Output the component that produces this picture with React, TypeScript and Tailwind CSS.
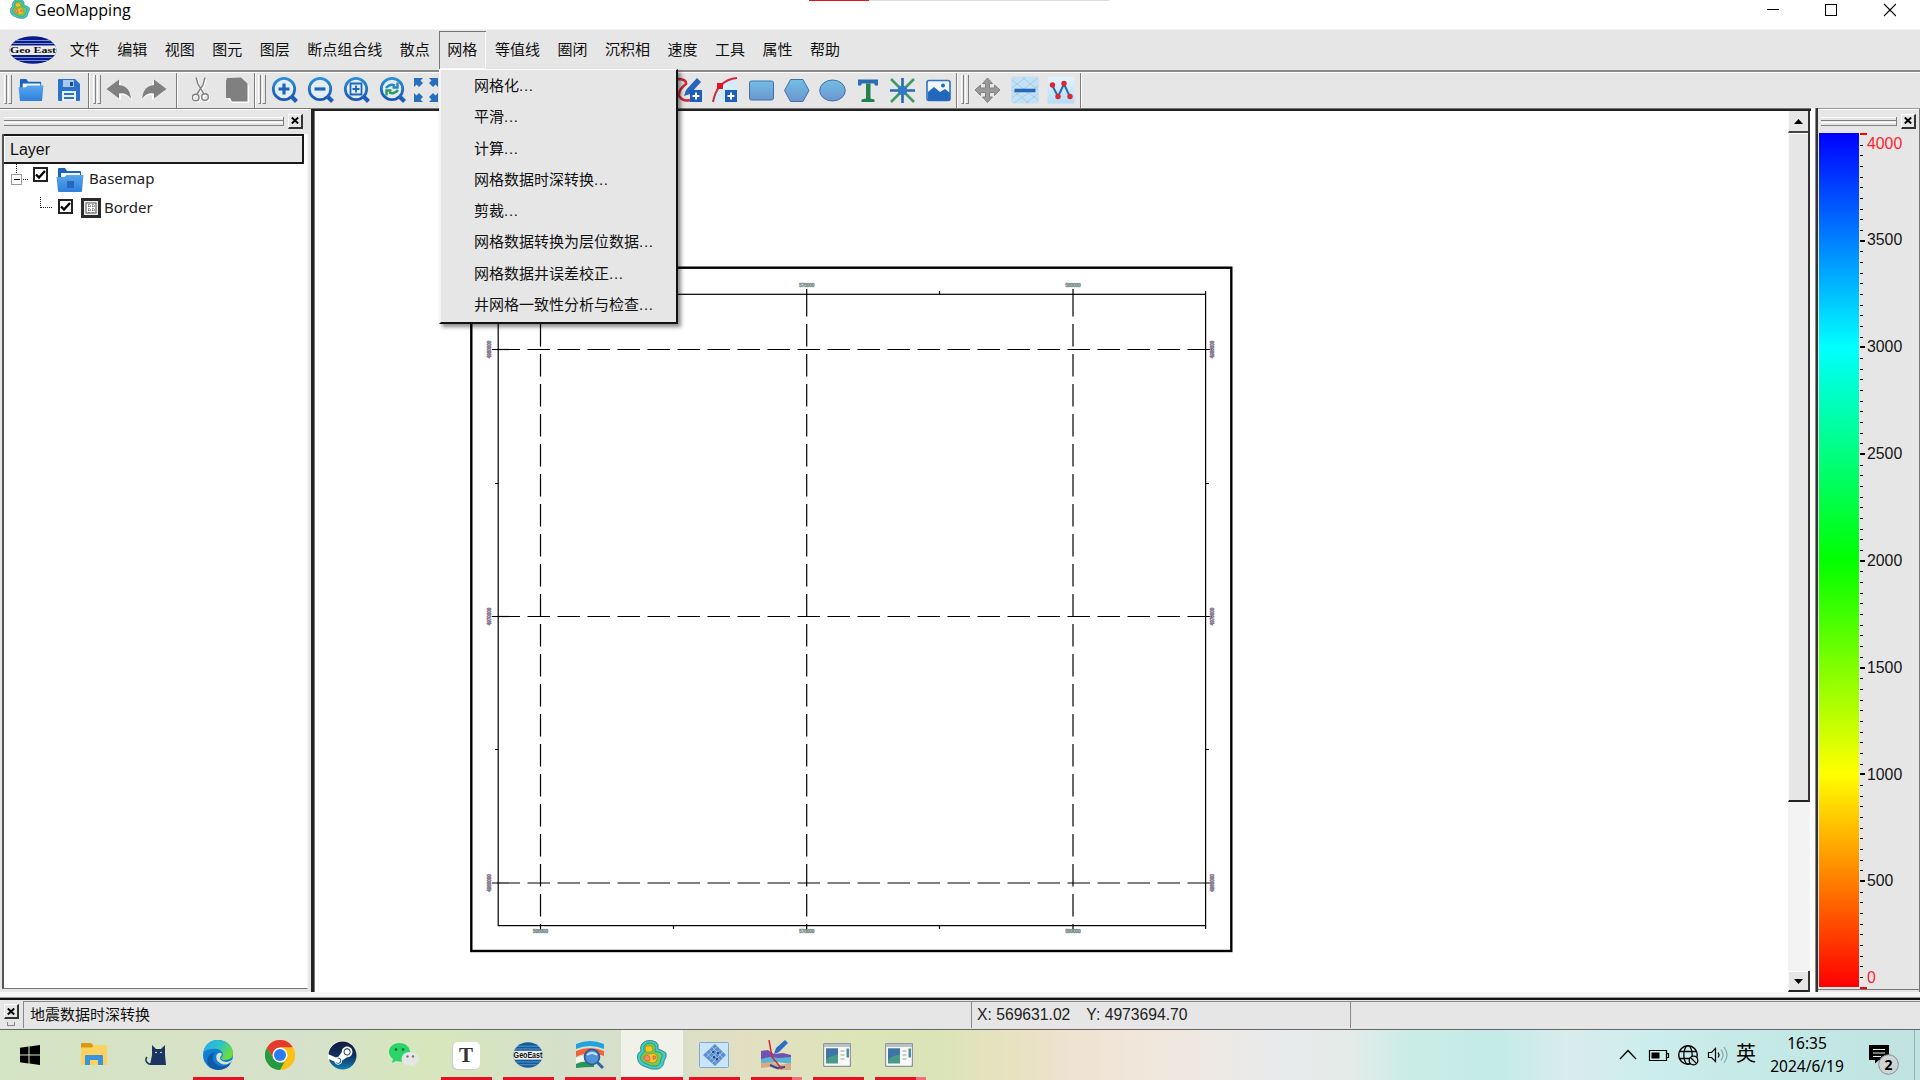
import React from "react";
import { FaSteam } from "react-icons/fa";

const menus = ["文件", "编辑", "视图", "图元", "图层", "断点组合线", "散点", "网格", "等值线", "圈闭", "沉积相", "速度", "工具", "属性", "帮助"];
const gridMenu = [
  "网格化",
  "平滑",
  "计算",
  "网格数据时深转换",
  "剪裁",
  "网格数据转换为层位数据",
  "网格数据井误差校正",
  "井网格一致性分析与检查",
];

const Defs = () => (
  <svg className="absolute h-0 w-0">
    <defs>
      <linearGradient id="blue" x1="0" y1="0" x2="0" y2="1">
        <stop offset="0" stopColor="#2b8fd6" />
        <stop offset="1" stopColor="#1d57b5" />
      </linearGradient>
      <linearGradient id="folder" x1="0" y1="0" x2="0" y2="1">
        <stop offset="0" stopColor="#5aa6ec" />
        <stop offset="1" stopColor="#2f7fdc" />
      </linearGradient>
      <linearGradient id="shape" x1="0" y1="0" x2="0" y2="1">
        <stop offset="0" stopColor="#72bfe4" />
        <stop offset="1" stopColor="#6c95cf" />
      </linearGradient>
      <linearGradient id="pale" x1="0" y1="0" x2="0" y2="1">
        <stop offset="0" stopColor="#e4f3fd" />
        <stop offset="1" stopColor="#b5dcf7" />
      </linearGradient>
      <linearGradient id="edgeTop" x1="0" y1="0" x2="1" y2="0.5">
        <stop offset="0" stopColor="#2aa9e8" />
        <stop offset="0.55" stopColor="#2cc3c8" />
        <stop offset="1" stopColor="#6fdc3c" />
      </linearGradient>
      <linearGradient id="steam" x1="0" y1="0" x2="0" y2="1">
        <stop offset="0" stopColor="#141a3c" />
        <stop offset="0.5" stopColor="#10305c" />
        <stop offset="1" stopColor="#1180b8" />
      </linearGradient>
    </defs>
  </svg>
);

const GeoBlob = ({ s }: { s: number }) => (
  <svg width={s} height={s} viewBox="0 0 30 30">
    <path d="M9 1 Q14 -1 19 2 Q22 4 21 9 Q25 10 29 13 Q30 17 27 21 Q27 27 21 29 Q14 30 9 27 Q1 25 0.5 18 Q0 13 4 11 Q2 4 9 1Z" fill="#35cfd6" stroke="#4a6b60" strokeWidth="0.8" />
    <path d="M10 3.5 Q14 2 17.5 4.5 Q19 7 18 11.5 Q24 12 25.5 15 Q25 18 23.5 20 Q24 25 19 26 Q13 26.500 9.500 24 Q4 22 3.500 17.500 Q4 14 7.500 12 Q5 6 10 3.500Z" fill="#6fcb5c" stroke="#3f7f4c" strokeWidth="0.7" />
    <path d="M9 6h6l1 4-2 2H9L8 8Z M6 17q3-4 7-3 4-2 7 1 1 4-1 7-4 2-7-0-5 0-6-5Z" fill="#fcc31e" stroke="#8d8d2a" strokeWidth="0.7" />
    <path d="M7 17q3-3 5-1 2 3 0 5-4 1-5-4ZM16 16q3-1 3 2-1 2-3 1Z" fill="#f58672" stroke="#a06a3c" strokeWidth="0.6" />
  </svg>
);

const GeoEast = ({ w, h, task }: { w: number; h: number; task?: boolean }) => (
  <svg width={w} height={h} viewBox="0 0 48 28" preserveAspectRatio="none">
    <defs>
      <clipPath id={task ? "geTask" : "geMenu"}>
        <ellipse cx="24" cy="14" rx="23.500" ry="13.700" />
      </clipPath>
    </defs>
    <g clipPath={task ? "url(#geTask)" : "url(#geMenu)"}>
      <rect width="48" height="28" fill={task ? "#125c9e" : "#0a1a8c"} />
      <path d="M0 4.500h48M0 7.500h48M0 21.500h48M0 24.500h48" stroke="#8fb0da" strokeWidth="0.8" />
      <rect y="9.500" width="48" height="9.500" fill="#ececec" />
    </g>
    <text x="24" y="17" textAnchor="middle" textLength="46" lengthAdjust="spacingAndGlyphs" fontSize={task ? 9 : 8} fontWeight="700" className={task ? "font-['Liberation_Sans']" : "font-['Liberation_Serif']"} fill="#111">
      {task ? "GeoEast" : "Geo East"}
    </text>
  </svg>
);

const FolderIcon = ({ tree }: { tree?: boolean }) => (
  <svg width={tree ? 28 : 26} height={tree ? 26 : 24} viewBox="0 0 28 26">
    <path d="M2 2q0-1 1-1h6l2 3h13q1 0 1 1v7H2Z" fill="#1d63bd" />
    <rect x="5" y="6" width="19" height="7" fill="#f4f8fc" />
    <path d="M0.500 10h8l2-2h17l-1.500 16q0 1-1 1H3q-1 0-1-1Z" fill="url(#folder)" />
    {tree && <rect x="11" y="14" width="7" height="7" fill="#2668bd" />}
  </svg>
);

const SaveIcon = () => (
  <svg width="24" height="24" viewBox="0 0 24 24">
    <path d="M1 2q0-1 1-1h16l5 5v16q0 1-1 1H2q-1 0-1-1Z" fill="#2a72cc" />
    <rect x="6" y="2" width="11" height="7" fill="#a9c8ee" />
    <rect x="13" y="4" width="3" height="4" fill="#1c4a90" />
    <rect x="5" y="13" width="14" height="10" fill="#e8f0fa" />
    <path d="M7 16h10M7 20h10" stroke="#2a72cc" strokeWidth="1.800" />
  </svg>
);

const Arrow = ({ flip }: { flip?: boolean }) => (
  <svg width="26" height="22" viewBox="0 0 26 22" className={flip ? "-scale-x-100" : ""}>
    <path d="M1.500 11 14 2v5q10 1 11 14-4-7-11-6v5Z" fill="#fff" transform="translate(1 1)" />
    <path d="M0.500 10 13 0.500v5.500q11 1 12 14-4-6.500-12-5.500v5Z" fill="#808080" />
  </svg>
);

const Magnifier = ({ kind }: { kind: number }) => (
  <svg width="28" height="28" viewBox="0 0 28 28">
    <path d="M20 20l5.500 5.500" stroke="#1f5fb8" strokeWidth="4.200" />
    <circle cx="13" cy="13" r="10.700" fill="#e4eef6" stroke="url(#blue)" strokeWidth="2.800" />
    {kind === 0 && <path d="M7.500 13h11M13 7.500v11" stroke="#1f66ba" strokeWidth="3.200" />}
    {kind === 1 && <path d="M7.500 13h11" stroke="#1f66ba" strokeWidth="3.200" />}
    {kind === 2 && <path d="M7.500 7.500h11v11h-11ZM13 9.500v7M9.500 13h7" stroke="#1f66ba" strokeWidth="1.800" fill="none" />}
    {kind === 3 && (
      <g fill="none" strokeWidth="2.400">
        <path d="M7 12q4-5 9-2.500M18.500 6.500v5h-5" stroke="#2a86c4" />
        <path d="M19 14q-4 5-9 2.500M7.500 19.500v-5h5" stroke="#2f9a5c" />
      </g>
    )}
  </svg>
);

const Grip = () => (
  <div className="flex h-[29px] w-[8px] shrink-0 gap-[1px]">
    <div className="w-[3px] border-b border-l border-r border-b-[#808080] border-l-white border-r-[#808080]" />
    <div className="w-[4px] border-b border-l border-r border-b-[#808080] border-l-white border-r-[#808080]" />
  </div>
);

const Sep = () => <div className="-mb-[2px] h-[36px] w-[2px] shrink-0 border-l border-r border-l-[#7d7d7d] border-r-white" />;

const CloseBtn = () => (
  <div className="flex h-[15px] w-[15px] shrink-0 items-center justify-center border-b-2 border-l border-r-2 border-t border-b-[#333] border-l-white border-r-[#333] border-t-white bg-[#e6e6e6]">
    <svg width="8" height="7" viewBox="0 0 8 7">
      <path d="M0.800 0.500 7.200 6.500M7.200 0.500 0.800 6.500" stroke="#000" strokeWidth="1.900" />
    </svg>
  </div>
);

const DockGrip = () => (
  <div className="flex h-[9px] min-w-0 flex-1 flex-col justify-between border-r border-[#808080]">
    <div className="h-[4px] border-b border-t border-b-[#808080] border-t-white" />
    <div className="h-[4px] border-b border-t border-b-[#808080] border-t-white" />
  </div>
);

const Check = () => (
  <div className="flex h-[15px] w-[15px] shrink-0 items-center justify-center border-2 border-[#222] bg-white">
    <svg width="11" height="10" viewBox="0 0 11 10">
      <path d="M1 4.500 4 7.500 10 1" stroke="#000" strokeWidth="2.400" fill="none" />
    </svg>
  </div>
);

function TitleBar() {
  return (
    <div className="flex h-[29px] w-full shrink-0 bg-white">
      <div className="w-[10px]" />
      <div className="-mt-px h-[20px] w-[25px]">
        <GeoBlob s={20} />
      </div>
      <div className="w-[774px] font-['Open_Sans','Noto_Sans',sans-serif] text-[16px] leading-[20px] text-black">GeoMapping</div>
      <div className="h-px w-[60px] bg-[#e81123]" />
      <div className="h-px w-[240px] bg-[#ddd]" />
      <div className="flex flex-1 justify-end pr-[24px]">
        <svg width="130" height="20" viewBox="0 0 130 20" fill="none" stroke="#000" shapeRendering="crispEdges">
          <path d="M1 9.500h12M59.500 4.500h11v11h-11Z" />
          <path d="M118 4l12 12M130 4l-12 12" shapeRendering="auto" strokeWidth="1.100" />
        </svg>
      </div>
    </div>
  );
}

function MenuBar() {
  return (
    <div className="flex h-[43px] shrink-0 border-b-2 border-t border-b-[#8a8a8a] border-t-[#f4f4f4] bg-[#e6e6e6]">
      <div className="ml-[9px] mt-[6px] h-[28px] w-[52px]">
        <GeoEast w={48} h={28} />
      </div>
      {menus.map((m) => (
        <div
          key={m}
          className={
            "mt-px h-[38px] whitespace-nowrap px-[8.75px] text-[15px] leading-[37px] text-[#111] " +
            (m === "网格" ? "shadow-[inset_1px_1px_0_#777,inset_-1px_-1px_0_#fff]" : "")
          }
        >
          {m}
        </div>
      ))}
    </div>
  );
}

function ToolBar() {
  return (
    <div className="flex h-[36px] shrink-0 items-center border-t border-white bg-[#e6e6e6] pb-[2px]">
      <div className="flex h-full w-[88px] items-center pl-[4px]">
        <Grip />
        <div className="ml-[6px] w-[39px]"><FolderIcon /></div>
        <SaveIcon />
      </div>
      <Sep />
      <div className="flex h-full w-[86px] items-center pl-[3px]">
        <Grip />
        <div className="ml-[5px] flex gap-[9px]"><Arrow /><Arrow flip /></div>
      </div>
      <Sep />
      <div className="flex h-full w-[76px] items-center gap-[15px] pl-[14px]">
        <svg width="18" height="26" viewBox="0 0 18 26" fill="none" strokeWidth="1.400">
          <g stroke="#fff" transform="translate(1 1)">
            <path d="M4.500 1 6 7l6 10M13 1l-2 7-6 9" /><circle cx="4" cy="20.500" r="3.300" /><circle cx="13.500" cy="20" r="3.300" />
          </g>
          <g stroke="#808080">
            <path d="M4 0.500 6 7l6 10M13 0.500 11 8l-6 9" /><circle cx="3.700" cy="20.500" r="3.300" /><circle cx="13" cy="20" r="3.300" />
          </g>
        </svg>
        <svg width="24" height="26" viewBox="0 0 24 26">
          <path d="M2 2h15l6 6v17H7l-5-4Z" fill="#fff" transform="translate(1 1)" />
          <path d="M2 1 16 0.500l6.500 6V24.500H7L5 21H1V4Z" fill="#808080" />
        </svg>
      </div>
      <Sep />
      <div className="flex h-full w-[700px] items-center pl-[2px]">
        <Grip />
        <div className="ml-[5px] flex gap-[8px]">
          <Magnifier kind={0} /><Magnifier kind={1} /><Magnifier kind={2} /><Magnifier kind={3} />
        </div>
        <svg className="ml-[7px]" width="24" height="24" viewBox="0 0 24 24" fill="#2670bf">
          <path d="M0 0h9L6.500 2.500 9 5 5 9 2.500 6.500 0 9ZM24 0h-9l2.500 2.500L15 5l4 4 2.500-2.500L24 9ZM0 24h9l-2.500-2.500L9 19l-4-4-2.500 2.500L0 15ZM24 24h-9l2.500-2.500L15 19l4-4 2.500 2.500L24 15Z" />
        </svg>
        <div className="w-[238px] shrink-0" />
        <svg width="28" height="26" viewBox="0 0 28 26" className="shrink-0">
          <path d="M1 2q10 0 9 5-8 6-7 12 4 6 11 4" fill="none" stroke="#d22838" strokeWidth="2.600" />
          <path d="M8 19l2-6 11-12 4 4-11 12Z" fill="#2762bd" />
          <rect x="14" y="13" width="12" height="12" fill="#1e5dbb" />
          <path d="M20 15.500v7M16.500 19h7" stroke="#fff" strokeWidth="2" />
        </svg>
        <svg width="26" height="26" viewBox="0 0 26 26" className="ml-[8px] shrink-0">
          <path d="M1 25Q5 3 25 1v24Z" fill="#d4ebf9" />
          <path d="M1 25Q5 3 25 1" fill="none" stroke="#d22838" strokeWidth="2" />
          <rect x="5" y="6" width="6" height="6" fill="#e0141e" />
          <rect x="13" y="13" width="12" height="12" fill="#1e5dbb" />
          <path d="M19 15.500v7M15.500 19h7" stroke="#fff" strokeWidth="2" />
        </svg>
        <svg width="204" height="28" viewBox="748 76 204 28" className="ml-[10px] shrink-0">
          <rect x="749.500" y="81" width="24" height="19" rx="2" fill="url(#shape)" stroke="#4271a8" />
          <path d="M784.500 90.500l6-11h12.500l6 11-6 11H790.500Z" fill="url(#shape)" stroke="#4271a8" />
          <ellipse cx="832.500" cy="90.500" rx="12.800" ry="10.500" fill="url(#shape)" stroke="#4271a8" />
          <path d="M858 79.500h20v6h-3l-1-2h-12l-1 2h-3Z" fill="#2b6cb5" />
          <path d="M866 83.500h4.500v15l4 1v2.500h-13v-2.500l4.500-1Z" fill="#24804f" />
          <path d="M891 79l23 23M914 79l-23 23" stroke="#3f9a68" strokeWidth="2.600" />
          <path d="M902.500 78v25M890 90.500h25" stroke="#2568b8" strokeWidth="2.600" />
          <circle cx="902.500" cy="90.500" r="4.800" fill="#3277cc" />
          <rect x="927" y="80.500" width="23" height="20" rx="2" fill="#eef6fc" stroke="#2f72bd" strokeWidth="1.600" />
          <path d="M928 92l6-5 6 5 5-3 5 4v7.500H928Z" fill="#2367bd" />
          <circle cx="943" cy="85.500" r="2" fill="#2568b8" />
        </svg>
      </div>
      <Sep />
      <div className="flex h-full w-[122px] items-center pl-[3px]">
        <Grip />
        <svg width="102" height="30" viewBox="974 75 102 30" className="ml-[5px] shrink-0">
          <path d="M987.500 78l5 5.500h-3v4.500h5v-3l5.500 5-5.500 5.500v-3h-5v4.500h3l-5 5.500-5-5.500h3v-4.500h-5v3l-5.500-5.500 5.500-5v3h5v-4.500h-3Z" fill="#999" stroke="#828282" />
          <rect x="1011" y="76.500" width="28" height="27" rx="2" fill="#c2e1f5" />
          <path d="M1012 88l14-11M1012 98l26-20M1014 103l24-17M1026 103l12-9M1012 80l26 20M1012 90l17 13M1022 77l16 13" stroke="#a5cbe5" />
          <path d="M1014.500 90.500h21" stroke="#2568b8" strokeWidth="3.600" />
          <rect x="1047.500" y="76.500" width="27" height="27" rx="2" fill="url(#pale)" />
          <path d="M1052 85l6 11.500 6-12.500 6 13" fill="none" stroke="#2a6aa8" strokeWidth="2" />
          <g fill="#dd2530"><circle cx="1052.500" cy="85" r="2.700" /><circle cx="1058" cy="96.500" r="2.700" /><circle cx="1064" cy="83.500" r="2.700" /><circle cx="1070" cy="96.500" r="2.700" /></g>
        </svg>
      </div>
      <Sep />
    </div>
  );
}

function LayerPanel() {
  return (
    <div className="flex h-full w-[311px] shrink-0 flex-col border-t border-t-white">
      <div className="flex h-[24px] items-center gap-[4px] pb-[6px] pl-[4px] pr-[8px] pt-[4px]">
        <DockGrip />
        <CloseBtn />
      </div>
      <div className="ml-[2px] mr-[3px] flex h-[855px] flex-col border-b border-l-2 border-r border-b-[#777] border-l-[#555] border-r-[#f8f8f8] bg-white">
        <div className="h-[30px] w-[300px] border-b-2 border-r-2 border-t-2 border-[#1a1a1a] bg-[#e6e6e6] pl-[6px] font-['Liberation_Sans',sans-serif] text-[16px] leading-[27px] text-[#111] shadow-[inset_1px_1px_0_#fff]">
          Layer
        </div>
        <div className="flex h-[31px] pl-[7px]">
          <svg width="22" height="31" viewBox="0 1 22 31" fill="none" stroke="#777" shapeRendering="crispEdges">
            <path d="M5.500 1v11M12 16.500h5" strokeDasharray="1 1" stroke="#222" />
            <path d="M0.500 11.500h10v10H0.500Z" stroke="#999" />
            <path d="M3 16.500h6" stroke="#000" />
          </svg>
          <div className="mt-[3px]"><Check /></div>
          <div className="ml-[8px] mt-[3px] w-[33px]"><FolderIcon tree /></div>
          <span className="font-['Noto_Sans',sans-serif] text-[15px] leading-[28px] text-[#222]">Basemap</span>
        </div>
        <div className="flex h-[26px] pl-[36px]">
          <svg width="18" height="20" viewBox="0 0 18 20" fill="none" shapeRendering="crispEdges">
            <path d="M0.500 2v11M1 12.500h12" stroke="#222" strokeDasharray="1 1" />
          </svg>
          <div className="mt-[4px]"><Check /></div>
          <svg className="ml-[8px] mt-[3px]" width="20" height="20" viewBox="0 0 20 20">
            <rect x="1.500" y="1.500" width="17" height="17" fill="#eee" stroke="#2a2a2a" strokeWidth="3" />
            <rect x="5" y="5" width="10" height="10" fill="#fff" stroke="#555" strokeWidth="1" />
            <path d="M7 8h7M7 12h7M8 6v9M12 6v9" stroke="#444" strokeDasharray="1 1" />
          </svg>
          <span className="ml-[3px] font-['Noto_Sans',sans-serif] text-[15px] leading-[24px] text-[#222]">Border</span>
        </div>
      </div>
    </div>
  );
}

const gx = [540.5, 806.7, 1073];
const gy = [349.5, 616.5, 883];

function MapView() {
  return (
    <svg width="1473" height="881" viewBox="315 111 1473 881" fill="none" stroke="#000" className="shrink-0 bg-white">
      <rect x="471.300" y="267.700" width="760" height="683.300" strokeWidth="2.400" />
      <rect x="498.200" y="294.300" width="707.400" height="631.300" strokeWidth="1.200" />
      {gy.map((y, i) => (
        <g key={y} strokeWidth="1.200">
          <path d={`M497.500 ${y}H1206`} strokeDasharray="22.500 7.500" />
          <path d={`M492 ${y}h6M1206 ${y}h6`} />
          {[489, 1212].map((x) => (
            <text key={x} transform={`translate(${x + 1.700} ${y}) rotate(-90)`} textAnchor="middle" fontSize="4.500" fill="#5f5068" stroke="#8a7a94" strokeWidth="0.700" className="font-['Liberation_Sans']">
              {["4980000", "4970000", "4960000"][i]}
            </text>
          ))}
        </g>
      ))}
      {gx.map((x, i) => (
        <g key={x} strokeWidth="1.200">
          <path d={`M${x} 294V926`} strokeDasharray="22.500 7.500" />
          <path d={`M${x} 289v6M${x} 925v6`} />
          {[287.3, 933.3].map((y) => (
            <text key={y} x={x} y={y} textAnchor="middle" fontSize="4.500" fill="#506462" stroke="#7f9592" strokeWidth="0.700" className="font-['Liberation_Sans']">
              {["560000", "570000", "580000"][i]}
            </text>
          ))}
        </g>
      ))}
      <path d="M673.500 926v3M939.500 926v3M939.500 291v3M1205.600 926v3M1205.600 291v3M495 483.500h3M495 749.500h3M1206 483.500h3M1206 749.500h3" strokeWidth="1.200" />
    </svg>
  );
}

function ScrollBar() {
  return (
    <div className="flex h-full w-[22px] shrink-0 flex-col border-r-2 border-[#333] bg-[#f3f3f3]">
      <div className="flex h-[22px] items-center justify-center border-b-2 border-l border-b-[#444] border-l-[#f8f8f8] bg-[#e6e6e6]">
        <svg width="9" height="5"><path d="M4.500 0 9 5H0Z" fill="#000" /></svg>
      </div>
      <div className="h-[669px] border-b-2 border-l border-t border-b-[#222] border-l-[#f8f8f8] border-t-white bg-[#e6e6e6]" />
      <div className="-mr-[2px] flex-1 bg-[#f3f3f3]" />
      <div className="flex h-[21px] items-center justify-center border-b-2 border-l border-t border-b-[#222] border-l-[#f8f8f8] border-t-white bg-[#e6e6e6]">
        <svg width="9" height="5"><path d="M4.500 5 9 0H0Z" fill="#000" /></svg>
      </div>
    </div>
  );
}

function ColorScale() {
  const ticks = Array.from({ length: 81 }, (_, i) => i);
  const labels: [number, string][] = [[143, "4000"], [239, "3500"], [346, "3000"], [453, "2500"], [560, "2000"], [667, "1500"], [774, "1000"], [880, "500"], [977, "0"]];
  return (
    <div className="flex h-[884px] w-[102px] shrink-0 flex-col border-r border-t border-r-[#777] border-t-[#999]">
      <div className="flex h-[24px] items-center gap-[4px] border-t border-t-white pb-[3px] pl-[3px] pr-[3px] pt-[2px]">
        <DockGrip />
        <CloseBtn />
      </div>
      <div className="flex h-[857px] border-b border-[#777] pl-[1px]">
        <div className="h-[854px] w-[40px] bg-[linear-gradient(to_bottom,#0000ff_0%,#00ffff_25%,#00ff00_50%,#ffff00_75%,#ff0000_100%)]" />
        <svg width="58" height="856" viewBox="1859 133 58 856">
          {ticks.map((i) => {
            const y = 134 + i * 10.67;
            const end = i === 0 || i === 80;
            const major = i % 10 === 0;
            return <rect key={i} x="1860" y={Math.round(y) - (major ? 1 : 0)} width={end ? 7 : major ? 5 : 3} height={major ? 2 : 1} fill={end ? "#f00" : "#000"} />;
          })}
          {labels.map(([y, t]) => (
            <text key={t} x="1867" y={y + 6} fontSize="16" textLength={t.length * 8.8} lengthAdjust="spacingAndGlyphs" className="font-['Liberation_Sans']" fill={t === "4000" || t === "0" ? "#ff1e2c" : "#151515"}>
              {t}
            </text>
          ))}
        </svg>
      </div>
    </div>
  );
}

const Cell = ({ children, bar, active }: { children: React.ReactNode; bar?: number; active?: boolean }) => (
  <div className={"flex h-full shrink-0 flex-col items-center " + (active ? "w-[62px] bg-[#f0f2ea]" : "w-[62px]")}>
    <div className="flex h-[47px] items-center justify-center pt-[3px]">{children}</div>
    {bar ? (
      <div className={"flex h-[3px] " + (active ? "w-full" : "w-[51px]")}>
        <div className="flex-1 bg-[#e81123]" />
        {bar === 2 && <div className="w-[10px] bg-[#f0707c]" />}
      </div>
    ) : null}
  </div>
);

const WindowIcon = () => (
  <svg width="28" height="24" viewBox="0 0 28 24" className="mr-[2px]">
    <rect x="0.500" y="0.500" width="27" height="23" rx="1.500" fill="#f8f8f8" stroke="#8d979c" strokeWidth="1.400" />
    <rect x="1" y="1" width="26" height="3" fill="#b8c1c5" />
    <rect x="3" y="5.500" width="12" height="15" fill="#4a9a8a" />
    <path d="M3 5.500h12v6Q8 12 3 17Z" fill="#3f74a8" />
    <path d="M17.500 8h4M17.500 12h4M17.500 16h4" stroke="#ccc" strokeWidth="2" />
    <rect x="23.500" y="5.500" width="2.500" height="9" fill="#4a8fa0" />
  </svg>
);

function TaskBar() {
  return (
    <div className="flex h-[50px] shrink-0 bg-[linear-gradient(to_right,#d3e4c4_0px,#d7e2c6_180px,#d5e1cb_300px,#d7e7bb_430px,#d5e0cb_560px,#d8dfc9_660px,#e2dfc2_740px,#dce5b8_860px,#dbe4b8_940px,#e8e2c0_1010px,#eee2d0_1070px,#f1e7dc_1150px,#e9eaeb_1270px,#e4ebe9_1350px,#caece6_1410px,#c4ebe6_1500px,#d9ecec_1570px,#cceded_1650px,#c4e9e7_1760px,#c0e3e0_1920px)]">
      <div className="flex w-[63px] items-center pl-[20px]">
        <svg width="20" height="20" viewBox="0 0 20 20"><path d="M0 2.800 8.500 1.600V9.500H0ZM9.500 1.500 20 0v9.500H9.500ZM0 10.500h8.500v8L0 17.300ZM9.500 10.500H20V20L9.500 18.600Z" /></svg>
      </div>
      <Cell>
        <svg width="28" height="24" viewBox="0 0 28 24">
          <path d="M1 1q0-1 1-1h9l2 2v4H1Z" fill="#dc9a10" />
          <path d="M1 4.500h11l2-2.500h12q1 0 1 1v18q0 1-1 1H2q-1 0-1-1Z" fill="#fbd160" />
          <path d="M5 22V13q0-1 1-1h16q1 0 1 1v9h-5v-5h-8v5Z" fill="#3a93de" />
        </svg>
      </Cell>
      <Cell>
        <svg width="22" height="22" viewBox="0 0 22 22">
          <path d="M2 13q-3 4 2 7h3" fill="none" stroke="#1b3560" strokeWidth="1.500" />
          <path d="M7 1l4 4h5l4-4v10l1 10H5l2-10Z" fill="#1b3560" />
          <circle cx="11" cy="8.500" r="0.800" fill="#fff" /><circle cx="16" cy="8.500" r="0.800" fill="#fff" />
        </svg>
      </Cell>
      <Cell bar={1}>
        <svg width="30" height="30" viewBox="0 0 30 30">
          <circle cx="15" cy="15" r="15" fill="#0f7fd6" />
          <path d="M0.500 12Q3 0 15 0 29 1 30 13q0 7-8 7-4 0-4-2 3-3 1-6-3-4-9-3-6 0-9.500 3Z" fill="url(#edgeTop)" />
          <path d="M12 12q-5 7 1 12 7 5 15-1-4 7-13 7-11-1-11-10 2-7 8-8Z" fill="#1259a8" />
          <path d="M19 14q-2 3-2 5 3 4 9 2.500l3.500-2Q28 23 26.500 23q-5 3-9.500 0-5-3-3.500-8 3-4 5.500-1Z" fill="#d8e4c8" />
        </svg>
      </Cell>
      <Cell>
        <svg width="30" height="30" viewBox="0 0 30 30">
          <circle cx="15" cy="15" r="15" fill="#fbc116" />
          <path d="M2 7.500A15 15 0 0 1 28 7.500H15L8.500 18.700Z" fill="#e33b2e" />
          <path d="M2 7.500 8.500 18.700 15 22.500h6.500L15 30A15 15 0 0 1 2 7.500Z" fill="#249a41" />
          <path d="M21.500 18.700 15 30A15 15 0 0 0 28 7.500H15Z" fill="#fbc116" />
          <circle cx="15" cy="15" r="7.500" fill="#fff" /><circle cx="15" cy="15" r="6" fill="#2a7bf0" />
        </svg>
      </Cell>
      <Cell>
        <div className="flex h-[28px] w-[28px] items-center justify-center rounded-full bg-white">
          <FaSteam size={29} className="shrink-0 fill-[url(#steam)]" />
        </div>
      </Cell>
      <Cell>
        <svg width="30" height="26" viewBox="0 0 30 26">
          <path d="M10.500 1C4 1 0 5 0 10q0 4 4 7l-1 4 4-2q8 2 12-2 3-3 2-8Q19 1 10.500 1Z" fill="#2bd468" />
          <path d="M21 10q-8 0-8.500 7 1 7 10 6.500l3.500 1.500-0.500-2.500Q30 20 30 16.500 29 10 21 10Z" fill="#e6e6e6" />
          <circle cx="7" cy="7.500" r="1.400" fill="#0e7a36" /><circle cx="14" cy="7.500" r="1.400" fill="#0e7a36" />
          <circle cx="18.500" cy="14.500" r="1.200" fill="#777" /><circle cx="24" cy="14.500" r="1.200" fill="#777" />
        </svg>
      </Cell>
      <Cell bar={1}>
        <div className="h-[27px] w-[27px] rounded-[5px] bg-white text-center font-['Liberation_Serif',serif] text-[21px] font-bold leading-[26px] text-[#333] shadow-[-1px_1px_1px_#ccc]">T</div>
      </Cell>
      <Cell bar={1}><GeoEast w={30} h={26} task /></Cell>
      <Cell bar={1}>
        <svg width="30" height="28" viewBox="0 0 30 28">
          <path d="M1 3Q15-3 29 3v5Q15 2 1 8Z" fill="#22a3e0" />
          <path d="M1 10Q15 4 29 10v5Q15 9 1 16Z" fill="#f0643c" />
          <path d="M1 17q7-3 14-2v4q-8 0-14 3Z" fill="#f4f4f4" />
          <path d="M1 23q8-4 18-1v4Q9 26 1 27Z" fill="#27955a" />
          <circle cx="17" cy="16" r="7.500" fill="#4f93d6" stroke="#2a5596" strokeWidth="1.600" />
          <path d="M22.500 21.500 28 27" stroke="#2e64b0" strokeWidth="3" />
          <path d="M12 14q5-4 10 0" stroke="#c5e3fa" strokeWidth="2" fill="none" />
        </svg>
      </Cell>
      <Cell bar={1} active><GeoBlob s={30} /></Cell>
      <Cell bar={1}>
        <svg width="30" height="26" viewBox="0 0 30 26">
          <rect x="0.500" y="0.500" width="29" height="25" rx="1" fill="#c9e5fb" stroke="#83a9c9" />
          <path d="M4 13 16 2l11 11-11 11Z" fill="#5c8fce" />
          <path d="M7 10.500l11 11M10 7.500l11 11M13 5l11 11M7 15.500l11-11M10 18.500l11-11M13 21l11-11" stroke="#a9cdf0" strokeWidth="0.800" />
          <path d="M13 10h2M18 11h2M14 15h2M17 17h2" stroke="#153a78" strokeWidth="1.600" />
        </svg>
      </Cell>
      <Cell bar={2}>
        <svg width="30" height="30" viewBox="0 0 30 30">
          <path d="M0 11l7-1 6 4 9-1 8 2v7H0Z" fill="#7450b2" />
          <path d="M0 19l8-2 10 1 12-1v7l-14-2-16 2Z" fill="#56b4d6" />
          <path d="M0 23l10-1 9 3 11-2v7H17l-8-3-9 1Z" fill="#dda984" />
          <path d="M9 25l7 3 8-1" stroke="#1f4fa0" strokeWidth="2" fill="none" />
          <path d="M8 0l3 17 10 12" stroke="#d22838" strokeWidth="1.500" fill="none" />
          <path d="M13 14l2-6 9-8 3 3-9 9Z" fill="#2d6cc8" />
        </svg>
      </Cell>
      <Cell bar={1}><WindowIcon /></Cell>
      <Cell bar={2}><WindowIcon /></Cell>
      <div className="min-w-0 flex-1" />
      <svg width="112" height="50" viewBox="1618 1030 112 50" fill="none" stroke="#000" className="shrink-0">
        <path d="M1620 1059l8-8.500 8 8.500" strokeWidth="1.300" />
        <path d="M1649.500 1050.500h17v10h-17ZM1667 1053.500h1.500v4H1667" strokeWidth="1.200" />
        <rect x="1651.500" y="1052.500" width="8" height="6" fill="#000" stroke="none" />
        <circle cx="1688" cy="1055" r="9.300" strokeWidth="1.400" />
        <ellipse cx="1688" cy="1055" rx="4.200" ry="9.300" strokeWidth="1.300" />
        <path d="M1679.500 1051.500h17M1679.500 1058.500h17" strokeWidth="1.300" />
        <circle cx="1693.500" cy="1060.500" r="4.300" fill="#c8ebe9" strokeWidth="1.300" />
        <path d="M1690.500 1057.500l6 6" strokeWidth="1.200" />
        <path d="M1708.500 1052.500h3l4-4v13l-4-4h-3Z" strokeWidth="1.200" />
        <path d="M1718 1052.500q2 2.500 0 5" strokeWidth="1.200" />
        <path d="M1721 1049.500q4 5.500 0 11M1724 1047q6 8 0 16" stroke="#86a8a6" strokeWidth="1.200" />
      </svg>
      <div className="w-[32px] shrink-0 pl-[6px] text-[20px] leading-[48px] text-black">英</div>
      <div className="flex w-[90px] shrink-0 flex-col items-center pt-[2px] font-['Noto_Sans',sans-serif] text-[15.500px] leading-[23px] text-black">
        <div>16:35</div>
        <div className="whitespace-nowrap">2024/6/19</div>
      </div>
      <div className="flex w-[68px] shrink-0 pl-[15px]">
        <svg width="47" height="50" viewBox="1867 1030 47 50">
          <path d="M1869 1045h20v15h-10l-4 3.500V1060h-6Z" fill="#000" />
          <path d="M1873 1049.500h12M1873 1053h12M1873 1056.500h8" stroke="#d8f0ee" strokeWidth="1.200" />
          <circle cx="1888.500" cy="1064.500" r="9.800" fill="#cfd3d3" stroke="#8b8f8f" />
          <text x="1888.500" y="1069.500" textAnchor="middle" fontSize="14" fontWeight="700" className="font-['Noto_Sans']">2</text>
        </svg>
        <div className="h-full w-px bg-[#98b8b6]" />
      </div>
    </div>
  );
}

export default function App() {
  return (
    <div className="relative flex h-[1080px] w-[1920px] flex-col overflow-hidden bg-[#e6e6e6] font-['Liberation_Sans','Noto_Sans_CJK_SC',sans-serif]">
      <Defs />
      <TitleBar />
      <MenuBar />
      <ToolBar />
      <div className="flex h-[884px] shrink-0">
        <div className="flex w-[311px] shrink-0 flex-col border-t border-[#777]">
          <LayerPanel />
        </div>
        <div className="flex w-[1500px] shrink-0 flex-col bg-white">
          <div className="h-[3px] border-b-2 border-t border-b-[#222] border-t-[#777]" />
          <div className="flex h-[881px]">
            <div className="w-[4px] shrink-0 border-r border-[#777] bg-[#222]" />
            <MapView />
            <ScrollBar />
          </div>
        </div>
        <div className="w-[4px] shrink-0 bg-white" />
        <div className="w-[3px] shrink-0 border-l border-[#888] bg-[#333]" />
        <ColorScale />
      </div>
      <div className="h-[6px] shrink-0 border-b border-[#999] bg-[#f6f6f6]" />
      <div className="flex h-[32px] shrink-0 border-b border-t-2 border-b-[#666] border-t-[#111] bg-[#e6e6e6]">
        <div className="flex w-[23px] flex-col items-center pl-[2px] pr-[3px] pt-[4px]">
          <CloseBtn />
          <div className="mt-[3px] h-[4px] w-[8px] border-b border-l border-r border-[#888]" />
        </div>
        <div className="my-[1px] w-[948px] border-l border-t border-[#888] pl-[6px] text-[15px] leading-[25px] text-[#111]">地震数据时深转换</div>
        <div className="my-[1px] flex w-[379px] gap-[16px] border-l border-t border-[#888] pl-[5px] text-[15.700px] leading-[26px] text-[#222]">
          <span>X: 569631.02</span>
          <span>Y: 4973694.70</span>
        </div>
        <div className="my-[1px] flex-1 border-l border-t border-[#888]" />
      </div>
      <TaskBar />
      <div className="absolute left-[439px] top-[69px] flex h-[255px] w-[239px] flex-col border-b-2 border-l-2 border-r-2 border-t border-b-[#111] border-l-[#f5f5f5] border-r-[#111] border-t-white bg-[#e6e6e6] pl-[33px] text-[15px] leading-[31.250px] text-[#111] shadow-[3px_3px_4px_rgba(0,0,0,0.45)]">
        {gridMenu.map((m) => (
          <div key={m} className="h-[31.250px] whitespace-nowrap">
            {m}
            <span className="tracking-[0.700px]">...</span>
          </div>
        ))}
      </div>
    </div>
  );
}
